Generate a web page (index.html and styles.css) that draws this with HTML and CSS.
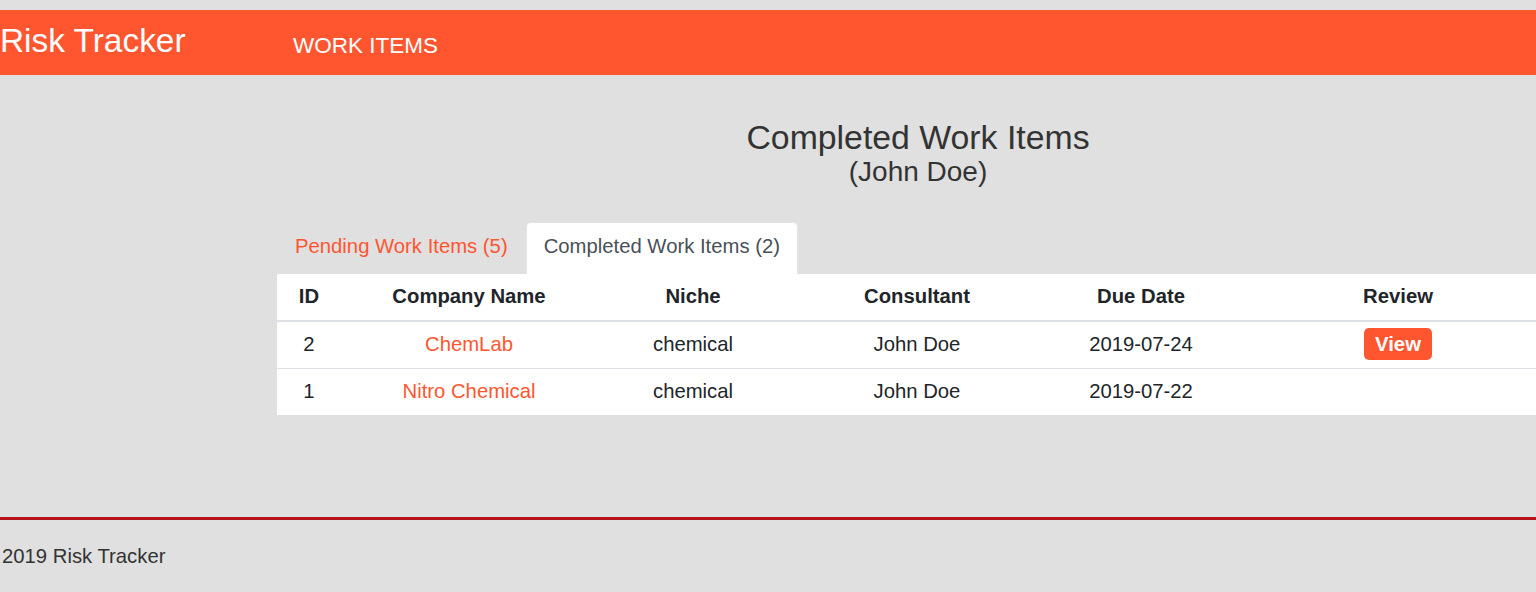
FILE: index.html
```html
<!DOCTYPE html>
<html lang="en">
<head>
<meta charset="utf-8">
<title>Risk Tracker</title>
<link rel="stylesheet" href="styles.css">
</head>
<body>
<header class="navbar">
  <a class="brand" href="#">Risk Tracker</a>
  <a class="nav-link" href="#">WORK ITEMS</a>
</header>
<main class="content">
  <h1 class="title">Completed Work Items</h1>
  <div class="subtitle">(John Doe)</div>
  <ul class="tabs">
    <li><a class="tab" href="#">Pending Work Items (5)</a></li>
    <li><a class="tab active" href="#">Completed Work Items (2)</a></li>
  </ul>
  <table class="items">
    <colgroup>
      <col class="c-id"><col class="c-company"><col class="c-niche"><col class="c-consultant"><col class="c-date"><col class="c-review">
    </colgroup>
    <thead>
      <tr><th>ID</th><th>Company Name</th><th>Niche</th><th>Consultant</th><th>Due Date</th><th>Review</th></tr>
    </thead>
    <tbody>
      <tr><td>2</td><td><a class="link" href="#">ChemLab</a></td><td>chemical</td><td>John Doe</td><td>2019-07-24</td><td><a class="btn" href="#">View</a></td></tr>
      <tr><td>1</td><td><a class="link" href="#">Nitro Chemical</a></td><td>chemical</td><td>John Doe</td><td>2019-07-22</td><td></td></tr>
    </tbody>
  </table>
</main>
<footer class="footer">2019 Risk Tracker</footer>
</body>
</html>
```
FILE: styles.css
```css
html {
  overflow-x: hidden;
  background: #e0e0e0;
}
body {
  margin: 0;
  font-family: "Liberation Sans", Arial, sans-serif;
  font-size: 20.3px;
  line-height: 30px;
  color: #333333;
  background: #e0e0e0;
  overflow-x: hidden;
}
a { text-decoration: none; }

.navbar {
  margin-top: 10px;
  height: 65px;
  background: #ff5630;
  display: flex;
  align-items: flex-start;
  overflow: hidden;
}
.brand {
  flex: 0 0 293px;
  font-size: 33.4px;
  line-height: 62px;
  color: #ffffff;
}
.nav-link {
  padding-top: 5.5px;
  font-size: 22.5px;
  line-height: 60px;
  color: #ffffff;
}

.content {
  margin-left: 277px;
  width: 1282px;
  padding-bottom: 102px;
}
.title {
  margin: 44px 0 0;
  font-size: 33.8px;
  line-height: 36px;
  font-weight: normal;
  text-align: center;
  color: #333333;
}
.subtitle {
  margin-top: 1px;
  font-size: 28px;
  line-height: 31px;
  text-align: center;
  color: #333333;
}

.tabs {
  list-style: none;
  margin: 35px 0 0;
  padding: 0;
  display: flex;
}
.tab {
  display: block;
  padding: 8px 17px 12px;
  border: 1px solid transparent;
  border-bottom: 0;
  border-radius: 5px 5px 0 0;
  color: #ff5630;
  height: 31px;
  line-height: 30px;
}
.tab.active {
  background: #ffffff;
  border-color: #e4e4e4;
  color: #495057;
}

.items {
  width: 1282px;
  table-layout: fixed;
  border-collapse: collapse;
  background: #ffffff;
  color: #212529;
}
.c-id { width: 64px; }
.c-company { width: 256px; }
.c-niche { width: 192px; }
.c-consultant { width: 256px; }
.c-date { width: 192px; }
.c-review { width: 322px; }
.items th,
.items td {
  padding: 7px 0 9px;
  text-align: center;
  line-height: 30px;
  height: 30px;
}
.items th {
  font-weight: bold;
  border-bottom: 2px solid #dee2e6;
}
.items tbody tr + tr td {
  border-top: 1px solid #dee2e6;
}
.link { color: #ff5630; }
.btn {
  display: inline-block;
  vertical-align: top;
  margin: -1px 0 -1px;
  padding: 4px 11px;
  line-height: 24px;
  font-weight: bold;
  color: #ffffff;
  background: #ff5630;
  border-radius: 5px;
}

.footer {
  border-top: 3px solid #b5121b;
  padding: 21px 0 0 2px;
  height: 72px;
  line-height: 30px;
  color: #333333;
}
```
